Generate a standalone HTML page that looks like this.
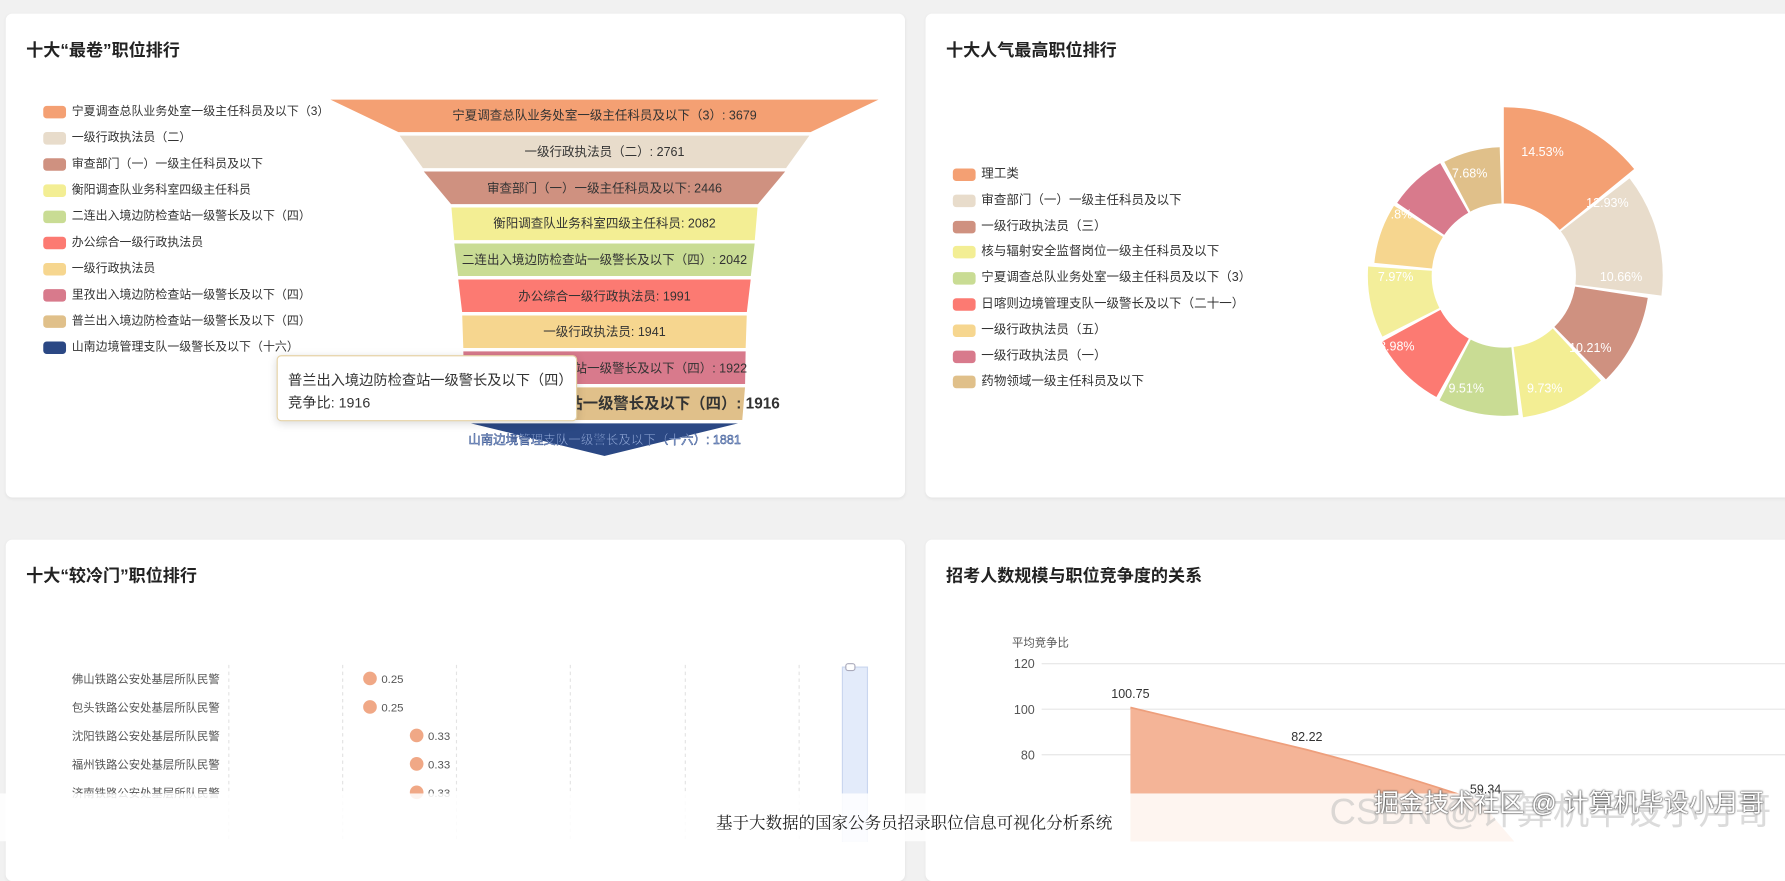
<!DOCTYPE html>
<html><head><meta charset="utf-8">
<style>
html,body{margin:0;padding:0;width:1785px;height:841px;overflow:hidden;background:#f1f1f1;}
#w{position:absolute;left:0;top:0;width:1568px;height:739px;transform:scale(1.13839);transform-origin:0 0;font-family:"Liberation Sans","Noto Sans CJK SC",sans-serif;color:#333;}
.card{position:absolute;background:#fff;border-radius:6px;box-shadow:0 1px 3px rgba(0,0,0,.06);}
.t{position:absolute;font-size:15px;font-weight:bold;color:#222;}
.lg{position:absolute;font-size:11px;color:#333;}
.lg div{height:23px;line-height:11px;white-space:nowrap;}
.lg i{display:inline-block;width:20px;height:11px;border-radius:3px;vertical-align:top;margin-right:5px;}
svg text{font-family:"Liberation Sans","Noto Sans CJK SC",sans-serif;}
</style></head><body><div id="w">

<div class="card" style="left:5px;top:12px;width:790px;height:425px"></div>
<div class="card" style="left:813px;top:12px;width:770px;height:425px"></div>
<div class="card" style="left:5px;top:474px;width:790px;height:300px"></div>
<div class="card" style="left:813px;top:474px;width:770px;height:300px"></div>

<div class="t" style="left:23px;top:33px">十大“最卷”职位排行</div>
<div class="t" style="left:831px;top:33px">十大人气最高职位排行</div>
<div class="t" style="left:23px;top:495px">十大“较冷门”职位排行</div>
<div class="t" style="left:831px;top:495px">招考人数规模与职位竞争度的关系</div>

<div class="lg" style="left:38px;top:93px;font-size:10.5px">
<div><i style="background:#f4a073"></i>宁夏调查总队业务处室一级主任科员及以下（3）</div>
<div><i style="background:#e8dccb"></i>一级行政执法员（二）</div>
<div><i style="background:#cf9180"></i>审查部门（一）一级主任科员及以下</div>
<div><i style="background:#f3ee94"></i>衡阳调查队业务科室四级主任科员</div>
<div><i style="background:#c9dc94"></i>二连出入境边防检查站一级警长及以下（四）</div>
<div><i style="background:#fc7a72"></i>办公综合一级行政执法员</div>
<div><i style="background:#f6d68f"></i>一级行政执法员</div>
<div><i style="background:#d87a8c"></i>里孜出入境边防检查站一级警长及以下（四）</div>
<div><i style="background:#e0c08a"></i>普兰出入境边防检查站一级警长及以下（四）</div>
<div><i style="background:#2b4884"></i>山南边境管理支队一级警长及以下（十六）</div>
</div>

<svg style="position:absolute;left:0;top:0" width="1568" height="739">
<g stroke="#fff" stroke-width="1">
<polygon fill="#f4a073" points="288,87 774,87 712,116.6 350,116.6"/>
<polygon fill="#e8dccb" points="350,118.6 712,118.6 690.75,148.2 371.25,148.2"/>
<polygon fill="#cf9180" points="371.25,150.2 690.75,150.2 666,179.8 396,179.8"/>
<polygon fill="#f3ee94" points="396,181.8 666,181.8 663.5,211.4 398.5,211.4"/>
<polygon fill="#c9dc94" points="398.5,213.4 663.5,213.4 660,243 402,243"/>
<polygon fill="#fc7a72" points="402,245 660,245 656.5,274.6 405.5,274.6"/>
<polygon fill="#f6d68f" points="405.5,276.6 656.5,276.6 655.5,306.2 406.5,306.2"/>
<polygon fill="#d87a8c" points="406.5,308.2 655.5,308.2 655,337.8 407,337.8"/>
<polygon fill="#e0c08a" points="407,339.8 655,339.8 652.5,369.4 409.5,369.4"/>
<polygon fill="#2b4884" points="409.5,371.4 652.5,371.4 531,401"/>
</g>
<g font-size="11" fill="#333" text-anchor="middle">
<text x="531" y="105">宁夏调查总队业务处室一级主任科员及以下（3）: 3679</text>
<text x="531" y="137">一级行政执法员（二）: 2761</text>
<text x="531" y="169">审查部门（一）一级主任科员及以下: 2446</text>
<text x="531" y="200">衡阳调查队业务科室四级主任科员: 2082</text>
<text x="531" y="232">二连出入境边防检查站一级警长及以下（四）: 2042</text>
<text x="531" y="264">办公综合一级行政执法员: 1991</text>
<text x="531" y="295">一级行政执法员: 1941</text>
<text x="531" y="327">里孜出入境边防检查站一级警长及以下（四）: 1922</text>
<text x="531" y="359" font-size="13.5" font-weight="bold" fill="#333">普兰出入境边防检查站一级警长及以下（四）: 1916</text>
<text x="531" y="390" fill="#a8bde8" stroke="#2b4884" stroke-width="0.4">山南边境管理支队一级警长及以下（十六）: 1881</text>
</g>
</svg>

<div style="position:absolute;left:243px;top:312px;width:262px;height:56px;background:#fff;border:1px solid #e6d3a6;border-radius:4px;box-shadow:0 2px 8px rgba(0,0,0,.15);font-size:12.5px;color:#333;">
<div style="position:absolute;left:9px;top:10px;white-space:nowrap">普兰出入境边防检查站一级警长及以下（四）</div>
<div style="position:absolute;left:9px;top:30px">竞争比: 1916</div>
</div>

<div class="lg" style="left:837px;top:148px">
<div style="height:22.8px"><i style="background:#f4a073"></i>理工类</div>
<div style="height:22.8px"><i style="background:#e8dccb"></i>审查部门（一）一级主任科员及以下</div>
<div style="height:22.8px"><i style="background:#cf9180"></i>一级行政执法员（三）</div>
<div style="height:22.8px"><i style="background:#f3ee94"></i>核与辐射安全监督岗位一级主任科员及以下</div>
<div style="height:22.8px"><i style="background:#c9dc94"></i>宁夏调查总队业务处室一级主任科员及以下（3）</div>
<div style="height:22.8px"><i style="background:#fc7a72"></i>日喀则边境管理支队一级警长及以下（二十一）</div>
<div style="height:22.8px"><i style="background:#f6d68f"></i>一级行政执法员（五）</div>
<div style="height:22.8px"><i style="background:#d87a8c"></i>一级行政执法员（一）</div>
<div style="height:22.8px"><i style="background:#e0c08a"></i>药物领域一级主任科员及以下</div>
</div>

<svg style="position:absolute;left:0;top:0" width="1568" height="739">
<g fill="none" transform="translate(1321,242) scale(0.96)">
<circle r="110" stroke="#f4a073" stroke-width="88" stroke-dasharray="97.4 1000" transform="rotate(-90)"/>
<circle r="105.7" stroke="#e8dccb" stroke-width="79.4" stroke-dasharray="82.9 1000" transform="rotate(-37.69)"/>
<circle r="99.65" stroke="#cf9180" stroke-width="67.3" stroke-dasharray="63.7 1000" transform="rotate(8.86)"/>
<circle r="98.45" stroke="#f3ee94" stroke-width="64.9" stroke-dasharray="60.2 1000" transform="rotate(47.23)"/>
<circle r="97.2" stroke="#c9dc94" stroke-width="62.4" stroke-dasharray="56.4 1000" transform="rotate(83.99)"/>
<circle r="96.6" stroke="#fc7a72" stroke-width="61.2" stroke-dasharray="54.7 1000" transform="rotate(119.02)"/>
<circle r="95.2" stroke="#f3ee9a" stroke-width="58.4" stroke-dasharray="50.7 1000" transform="rotate(153.26)"/>
<circle r="92.5" stroke="#f6d68f" stroke-width="53" stroke-dasharray="43.3 1000" transform="rotate(185.58)"/>
<circle r="92.05" stroke="#d87a8c" stroke-width="52.1" stroke-dasharray="42.1 1000" transform="rotate(214.27)"/>
<circle r="91.7" stroke="#e0c08a" stroke-width="51.4" stroke-dasharray="41.3 1000" transform="rotate(242.35)"/>
</g>
<g font-size="11" fill="#fff" text-anchor="middle">
<text x="1355" y="137">14.53%</text>
<text x="1412" y="182">12.93%</text>
<text x="1424" y="247">10.66%</text>
<text x="1397" y="309">10.21%</text>
<text x="1357" y="345">9.73%</text>
<text x="1288" y="345">9.51%</text>
<text x="1227" y="308">8.98%</text>
<text x="1226" y="247">7.97%</text>
<text x="1228" y="192">7.8%</text>
<text x="1291" y="156">7.68%</text>
</g>

<g stroke="#e3e3e3" stroke-dasharray="3 3">
<line x1="201" y1="584" x2="201" y2="739"/><line x1="301" y1="584" x2="301" y2="739"/>
<line x1="401" y1="584" x2="401" y2="739"/><line x1="501" y1="584" x2="501" y2="739"/>
<line x1="602" y1="584" x2="602" y2="739"/><line x1="702" y1="584" x2="702" y2="739"/>
</g>
<g font-size="10" fill="#555" text-anchor="end">
<text x="193" y="600">佛山铁路公安处基层所队民警</text>
<text x="193" y="625">包头铁路公安处基层所队民警</text>
<text x="193" y="650">沈阳铁路公安处基层所队民警</text>
<text x="193" y="675">福州铁路公安处基层所队民警</text>
<text x="193" y="700">济南铁路公安处基层所队民警</text>
</g>
<g fill="#f0a886"><circle cx="325" cy="596" r="6"/><circle cx="325" cy="621" r="6"/><circle cx="366" cy="646" r="6"/><circle cx="366" cy="671" r="6"/><circle cx="366" cy="696" r="6"/></g>
<g font-size="10" fill="#555"><text x="335" y="600">0.25</text><text x="335" y="625">0.25</text><text x="376" y="650">0.33</text><text x="376" y="675">0.33</text><text x="376" y="700">0.33</text></g>
<rect x="740" y="586" width="22" height="160" fill="#e3ebfa" stroke="#c9d6ef"/>
<rect x="743" y="583" width="8" height="6" rx="2" fill="#fff" stroke="#aab"/>

<text x="889" y="568" font-size="10" fill="#555">平均竞争比</text>
<g stroke="#e6e6e6"><line x1="915" y1="583" x2="1568" y2="583"/><line x1="915" y1="623" x2="1568" y2="623"/><line x1="915" y1="663" x2="1568" y2="663"/></g>
<g font-size="11" fill="#555" text-anchor="end"><text x="909" y="587">120</text><text x="909" y="627">100</text><text x="909" y="667">80</text></g>
<path d="M993,621.5 Q1070,640 1148,658.6 Q1230,680 1300,704 L1330,739 L993,739 Z" fill="#f4b497"/>
<path d="M993,621.5 Q1070,640 1148,658.6 Q1230,680 1300,704" fill="none" stroke="#ee9f7c" stroke-width="1.5"/>
<g font-size="11" fill="#333" text-anchor="middle"><text x="993" y="613">100.75</text><text x="1148" y="651">82.22</text><text x="1305" y="697">59.34</text></g>
</svg>

<div style="position:absolute;left:0;top:697px;width:1568px;height:42px;background:rgba(255,255,255,.86);"></div>
<div style="position:absolute;left:0;top:712px;width:1606px;text-align:center;font-family:'Liberation Serif','Noto Serif CJK SC',serif;font-size:14.5px;color:#222;">基于大数据的国家公务员招录职位信息可视化分析系统</div>
<div style="position:absolute;left:1168px;top:688px;font-size:32px;color:rgba(190,190,190,.55);white-space:nowrap">CSDN @计算机毕设小月哥</div>
<div style="position:absolute;left:1207px;top:688px;font-size:22px;color:#fff;white-space:nowrap;text-shadow:0 0 2px #333,0 0 1px #333;">掘金技术社区 @ 计算机毕设小月哥</div>

</div></body></html>
